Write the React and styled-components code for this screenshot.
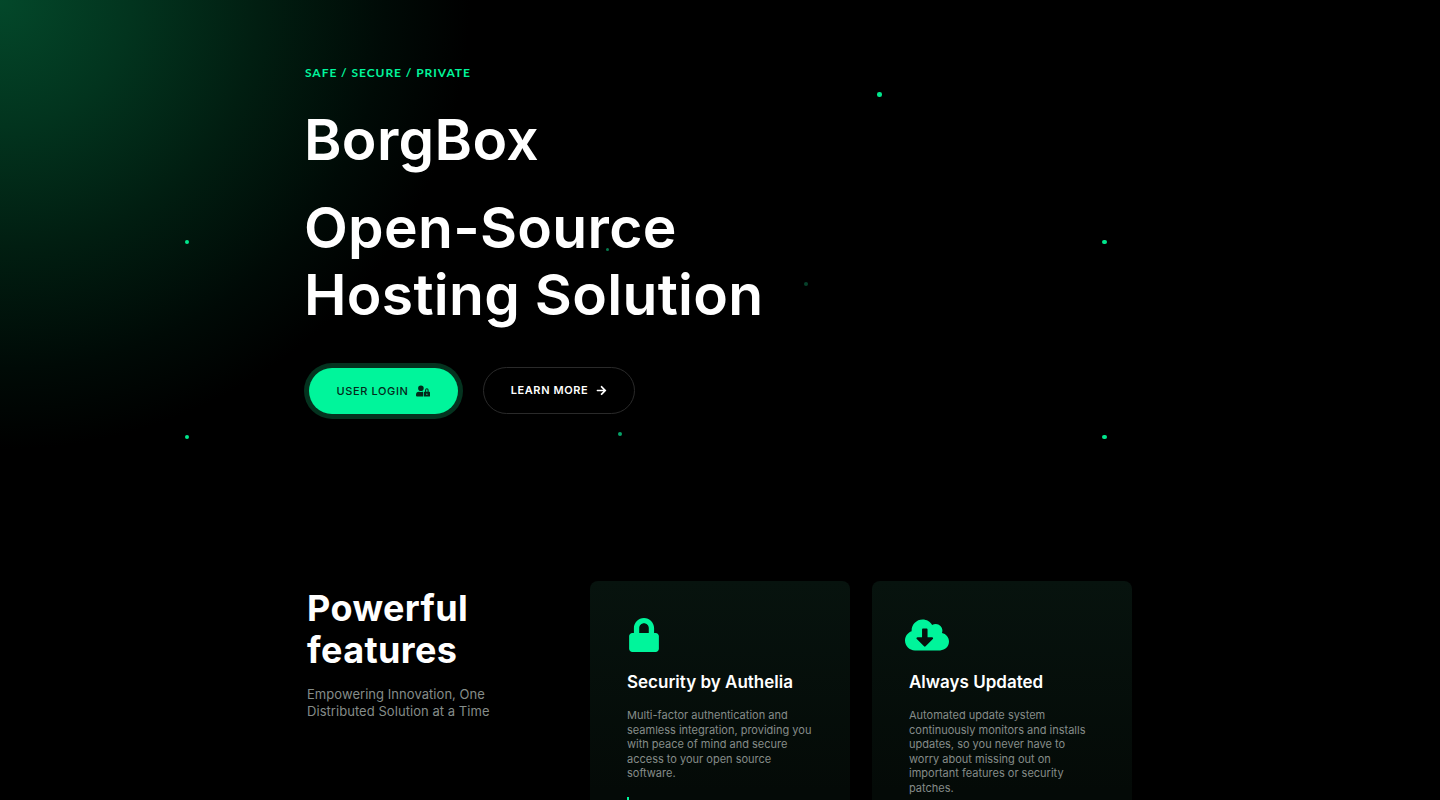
import React from 'react';
import styled, { createGlobalStyle } from 'styled-components';
import { FaLock, FaCloudDownloadAlt, FaUserLock, FaArrowRight } from 'react-icons/fa';

const GlobalStyle = createGlobalStyle`
  html, body {
    margin: 0;
    background: #000;
    height: 800px;
    overflow: hidden;
  }
  * { box-sizing: border-box; }
`;

const Page = styled.div`
  position: relative;
  width: 1440px;
  height: 800px;
  overflow: hidden;
  background: #000;
  font-family: Inter, "Noto Sans", sans-serif;
  color: #fff;
`;

const Glow = styled.div`
  position: absolute;
  left: 0;
  top: 0;
  width: 480px;
  height: 460px;
  background: radial-gradient(ellipse 470px 450px at 0 0, #03482a 0%, #02341e 28%, #011e11 55%, #000a06 82%, #000 100%);
`;

const Dot = styled.span`
  position: absolute;
  width: ${p => p.$size || 4.5}px;
  height: ${p => p.$size || 4.5}px;
  border-radius: 50%;
  background: ${p => p.$color || '#00e68c'};
`;

const Hero = styled.section`
  position: relative;
  height: 581px;
  padding: 66px 0 0 305px;
`;

const Eyebrow = styled.div`
  font-family: Lato, sans-serif;
  font-size: 12px;
  line-height: 14px;
  font-weight: 700;
  letter-spacing: 0.95px;
  color: #00f59b;
`;

const Brand = styled.h1`
  margin: 26px 0 0 -1px;
  font-size: 57px;
  line-height: 67px;
  font-weight: 600;
  letter-spacing: 0.3px;
`;

const Headline = styled.h2`
  margin: 21px 0 0 -1px;
  font-size: 57px;
  line-height: 67px;
  font-weight: 600;
  letter-spacing: 0.3px;
`;

const Actions = styled.div`
  display: flex;
  align-items: center;
  gap: 20px;
  margin-top: 35px;
`;

const PrimaryButton = styled.a`
  display: flex;
  align-items: center;
  justify-content: center;
  gap: 8px;
  width: 149px;
  height: 46px;
  margin: 5px 0 5px 4px;
  border-radius: 23px;
  background: #00f59b;
  box-shadow: 0 0 0 5px #04331f;
  color: #04281a;
  font-size: 11px;
  font-weight: 500;
  letter-spacing: 0.6px;
`;

const GhostButton = styled.a`
  display: flex;
  align-items: center;
  justify-content: center;
  gap: 8px;
  width: 152px;
  height: 47px;
  margin-bottom: 2px;
  margin-left: 5px;
  border: 1px solid #2a2a2a;
  border-radius: 24px;
  color: #fff;
  font-size: 11px;
  font-weight: 600;
  letter-spacing: 0.6px;
`;

const Features = styled.section`
  display: flex;
  padding-left: 307px;
`;

const Intro = styled.div`
  width: 283px;
  padding-top: 6px;
`;

const IntroTitle = styled.h3`
  margin: 0;
  font-size: 36px;
  line-height: 42px;
  font-weight: 700;
  letter-spacing: 0.4px;
`;

const IntroText = styled.p`
  margin: 15px 0 0;
  font-size: 13px;
  line-height: 17px;
  letter-spacing: 0.05px;
  color: #858c89;
`;

const Cards = styled.div`
  display: flex;
  gap: 22px;
`;

const Card = styled.article`
  width: 260px;
  height: 300px;
  padding: 36px 37px 0;
  border-radius: 8px;
  background: linear-gradient(180deg, #07130e 0%, #040a07 70%);
`;

const IconBox = styled.div`
  height: 36px;
  display: flex;
  align-items: center;
  color: #00f59b;
  font-size: ${p => p.$size}px;
  margin-left: ${p => p.$shift || 0}px;
`;

const CardTitle = styled.h4`
  margin: 17px 0 0;
  font-size: 17px;
  line-height: 24px;
  font-weight: 600;
`;

const CardText = styled.p`
  margin: 14px 0 0;
  font-size: 11px;
  line-height: 14.6px;
  color: #858c89;
`;

const CardLink = styled.div`
  width: 2px;
  height: 4px;
  margin-top: 16px;
  background: #00f59b;
`;

const dots = [
  { x: 877, y: 92 },
  { x: 184.5, y: 239.5 },
  { x: 1102, y: 239.5 },
  { x: 606, y: 248, size: 3, color: '#067a4e' },
  { x: 804, y: 282, size: 4, color: '#07412b' },
  { x: 184.5, y: 434.5 },
  { x: 1102, y: 434.5 },
  { x: 618, y: 432, size: 4, color: '#06a268' },
];

export default function App() {
  return (
    <Page>
      <GlobalStyle />
      <Glow />
      {dots.map(d => (
        <Dot key={`${d.x}-${d.y}`} $size={d.size} $color={d.color} style={{ left: d.x, top: d.y }} />
      ))}
      <Hero>
        <Eyebrow>SAFE / SECURE / PRIVATE</Eyebrow>
        <Brand>BorgBox</Brand>
        <Headline>Open-Source<br />Hosting Solution</Headline>
        <Actions>
          <PrimaryButton>USER LOGIN <FaUserLock size={14} /></PrimaryButton>
          <GhostButton>LEARN MORE <FaArrowRight size={11} /></GhostButton>
        </Actions>
      </Hero>
      <Features>
        <Intro>
          <IntroTitle>Powerful<br />features</IntroTitle>
          <IntroText>Empowering Innovation, One<br />Distributed Solution at a Time</IntroText>
        </Intro>
        <Cards>
          <Card>
            <IconBox $size={34}><FaLock /></IconBox>
            <CardTitle>Security by Authelia</CardTitle>
            <CardText>Multi-factor authentication and seamless integration, providing you with peace of mind and secure access to your open source software.</CardText>
            <CardLink />
          </Card>
          <Card>
            <IconBox $size={44} $shift={-4}><FaCloudDownloadAlt /></IconBox>
            <CardTitle>Always Updated</CardTitle>
            <CardText>Automated update system continuously monitors and installs updates, so you never have to worry about missing out on important features or security patches.</CardText>
          </Card>
        </Cards>
      </Features>
    </Page>
  );
}
